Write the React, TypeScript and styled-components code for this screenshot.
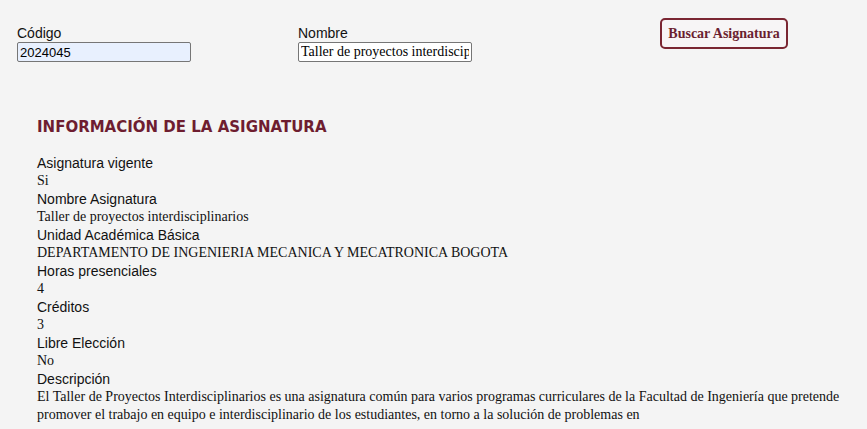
import React from 'react';
import styled, { createGlobalStyle } from 'styled-components';

const GlobalStyle = createGlobalStyle`
  html, body {
    margin: 0;
    padding: 0;
    background: #f4f4f4;
  }
`;

const Page = styled.div`
  width: 867px;
  height: 429px;
  overflow: hidden;
  background: #f4f4f4;
`;

const SearchBar = styled.div`
  display: flex;
  align-items: flex-start;
  padding: 18px 0 0 17px;
  height: 92px;
  box-sizing: border-box;
`;

const Field = styled.div<{ $width: number }>`
  display: flex;
  flex-direction: column;
  width: ${({ $width }) => $width}px;
  padding-top: 7px;
`;

const Label = styled.label`
  font-family: 'Liberation Sans', Arial, sans-serif;
  font-size: 14px;
  line-height: 17px;
  color: #111;
`;

const Input = styled.input<{ $filled?: boolean }>`
  box-sizing: border-box;
  width: 174px;
  height: 20px;
  margin: 0;
  padding: 0 2px;
  border: 1px solid #767676;
  border-radius: 2px;
  background: ${({ $filled }) => ($filled ? '#e8f0fe' : '#ffffff')};
  font-family: ${({ $filled }) =>
    $filled ? "'Liberation Sans', Arial, sans-serif" : "'Liberation Serif', 'Times New Roman', serif"};
  font-size: ${({ $filled }) => ($filled ? '13px' : '14px')};
  color: #000;
`;

const Button = styled.button`
  box-sizing: border-box;
  width: 128px;
  height: 31px;
  margin-left: 188px;
  border: 2px solid #7a2632;
  border-radius: 5px;
  background: #f7f5f6;
  color: #6b1f30;
  font-family: 'Liberation Serif', 'Times New Roman', serif;
  font-weight: bold;
  font-size: 14px;
  padding: 0;
  cursor: pointer;
`;

const Info = styled.section`
  padding: 25px 27px 0 37px;
`;

const Title = styled.h2`
  margin: 0 0 17px;
  font-family: 'DejaVu Sans', Tahoma, sans-serif;
  font-size: 15px;
  font-weight: bold;
  line-height: 20px;
  color: #6e1d30;
`;

const Row = styled.div`
  display: flex;
  flex-direction: column;
`;

const RowLabel = styled.span`
  font-family: 'Liberation Sans', Arial, sans-serif;
  font-size: 14px;
  line-height: 18px;
  color: #111;
`;

const RowValue = styled.span`
  font-family: 'Liberation Serif', 'Times New Roman', serif;
  font-size: 14px;
  line-height: 18px;
  color: #111;
`;

const rows: [string, string][] = [
  ['Asignatura vigente', 'Si'],
  ['Nombre Asignatura', 'Taller de proyectos interdisciplinarios'],
  ['Unidad Académica Básica', 'DEPARTAMENTO DE INGENIERIA MECANICA Y MECATRONICA BOGOTA'],
  ['Horas presenciales', '4'],
  ['Créditos', '3'],
  ['Libre Elección', 'No'],
  [
    'Descripción',
    'El Taller de Proyectos Interdisciplinarios es una asignatura común para varios programas curriculares de la Facultad de Ingeniería que pretende promover el trabajo en equipo e interdisciplinario de los estudiantes, en torno a la solución de problemas en',
  ],
];

const App: React.FC = () => {
  return (
    <Page>
      <GlobalStyle />
      <SearchBar>
        <Field $width={281}>
          <Label>Código</Label>
          <Input $filled defaultValue="2024045" />
        </Field>
        <Field $width={174}>
          <Label>Nombre</Label>
          <Input defaultValue="Taller de proyectos interdisciplinarios" />
        </Field>
        <Button>Buscar Asignatura</Button>
      </SearchBar>
      <Info>
        <Title>INFORMACIÓN DE LA ASIGNATURA</Title>
        {rows.map(([label, value]) => (
          <Row key={label}>
            <RowLabel>{label}</RowLabel>
            <RowValue>{value}</RowValue>
          </Row>
        ))}
      </Info>
    </Page>
  );
};

export default App;
